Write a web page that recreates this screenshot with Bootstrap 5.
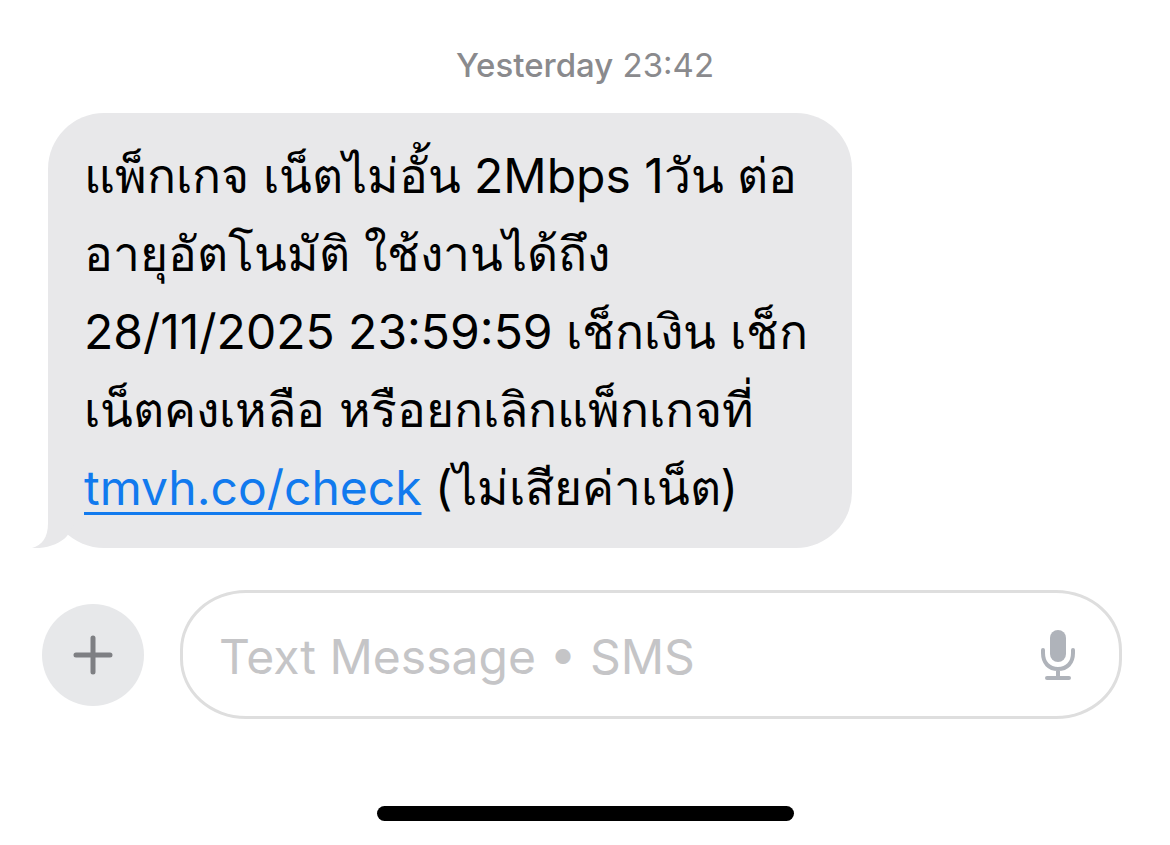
<!DOCTYPE html>
<html lang="th">
<head>
<meta charset="utf-8">
<meta name="viewport" content="width=device-width, initial-scale=1">
<title>Messages</title>
<link rel="stylesheet" href="https://cdn.jsdelivr.net/npm/bootstrap@5.3.0/dist/css/bootstrap.min.css">
<style>
body{font-family:Inter,"Liberation Sans",sans-serif;background:#fff;color:#000}
.stamp{font-size:33px;line-height:40px;color:#8a8a8d;padding-top:45px}
.bubble{background:#e8e8ea;border-radius:56px;width:max-content;min-width:804px;margin:28px 0 0 48px;padding:24px 36px 21px;font-size:48px;line-height:78px}
.bubble a{color:#117aee;text-decoration-thickness:3px;text-underline-offset:7px}
.tail{left:-16px;bottom:0;width:60px;height:60px}
.composer{padding:0 48px 0 42px;margin-top:42px;gap:36px}
.add-btn{width:102px;height:102px;background:#e7e8ea;color:#7e7f83}
.field{height:129px;border:3px solid #dedede;border-radius:66px/60px;padding:0 43px 0 36px}
.field input{font-size:48px;outline:0;min-width:0;padding:4px 0 0}
.field input::placeholder{color:#c5c5c7;opacity:1}
.mic{color:#afb3ba}
.home-bar{width:417px;height:15px;margin:87px auto 24px;background:#000}
</style>
</head>
<body>
<main class="container-fluid p-0">
<div class="stamp text-center"><span class="fw-medium">Yesterday</span> 23:42</div>
<div class="bubble position-relative">
<svg class="tail position-absolute" viewBox="0 0 60 60" aria-hidden="true"><path d="M16 0V35C16 50 10 57 0 60C14 61 28 56 35 48L46 30V0Z" fill="#e8e8ea"/></svg>
<div class="position-relative">แพ็กเกจ เน็ตไม่อั้น 2Mbps 1วัน ต่อ<br>อายุอัตโนมัติ ใช้งานได้ถึง<br>28/11/2025 23:59:59 เช็กเงิน เช็ก<br>เน็ตคงเหลือ หรือยกเลิกแพ็กเกจที่<br><a href="#">tmvh.co/check</a> (ไม่เสียค่าเน็ต)</div>
</div>
<form class="composer d-flex align-items-center">
<button type="button" class="add-btn btn rounded-circle border-0 p-0 flex-shrink-0 d-flex align-items-center justify-content-center" aria-label="Add">
<svg width="40" height="40" viewBox="0 0 40 40" fill="none" stroke="currentColor" stroke-width="5" stroke-linecap="round"><path d="M20 3V37M3 20H37"/></svg>
</button>
<div class="field flex-grow-1 d-flex align-items-center">
<input type="text" class="flex-grow-1 border-0 bg-transparent" placeholder="Text Message • SMS" aria-label="Text Message">
<button type="button" class="mic btn border-0 p-0 flex-shrink-0 d-flex" aria-label="Dictate">
<svg width="36" height="52" viewBox="0 0 36 52" fill="none" stroke="currentColor" stroke-width="4" stroke-linecap="round"><rect x="10" y="1" width="16" height="32" rx="8" fill="currentColor" stroke="none"/><path d="M3 21V24C3 34 9 40 18 40S33 34 33 24V21M18 40V49M7 49H29"/></svg>
</button>
</div>
</form>
<div class="home-bar rounded-pill"></div>
</main>
<script src="https://cdn.jsdelivr.net/npm/bootstrap@5.3.0/dist/js/bootstrap.bundle.min.js"></script>
</body>
</html>
